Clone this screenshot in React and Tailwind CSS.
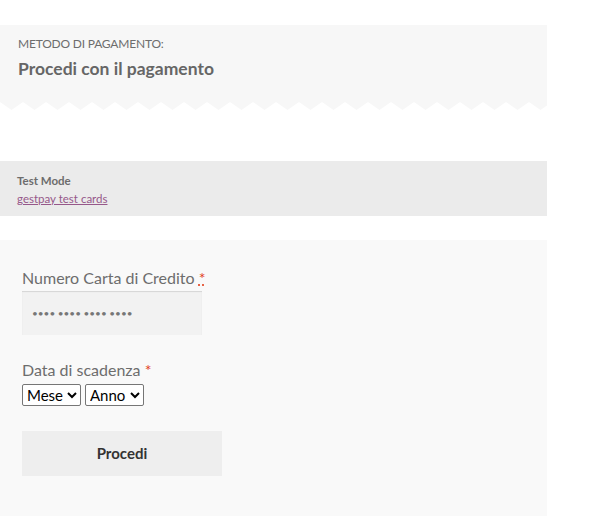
import React from 'react';

const font = { fontFamily: 'Lato, "Noto Sans", sans-serif' };

const Zigzag = () => (
    <svg width="547" height="10" className="block">
        <defs>
            <pattern id="zz" width="23" height="10" patternUnits="userSpaceOnUse">
                <path d="M0 0 H23 V2 L11.5 10 L0 2 Z" fill="#f7f7f7" />
            </pattern>
        </defs>
        <rect width="547" height="10" fill="url(#zz)" />
    </svg>
);

export default function App() {
    return (
        <div className="w-[601px] h-[522px] bg-white pt-[25px]" style={font}>
            <div className="w-[547px]">
                <div className="bg-[#f7f7f7] h-[75px] px-[18px] pt-[11px]">
                    <div className="text-[12px] leading-[16px] text-[#6d6d6d] uppercase tracking-[-0.2px]">Metodo di pagamento:</div>
                    <div className="mt-[6px] text-[17.5px] leading-[22px] font-bold text-[#666]">Procedi con il pagamento</div>
                </div>
                <Zigzag />

                <div className="mt-[51px] h-[55px] bg-[#ebebeb] px-[17px] pt-[12px]">
                    <div className="text-[11.5px] leading-[15px] font-bold text-[#6d6d6d]">Test Mode</div>
                    <a href="#" className="block mt-[3px] text-[11.5px] leading-[15px] text-[#96588a] underline">gestpay test cards</a>
                </div>

                <div className="mt-[24px] h-[276px] bg-[#f9f9f9] px-[22px] pt-[28px]">
                    <label className="block text-[16px] leading-[20px] text-[#6d6d6d]">
                        Numero Carta di Credito <abbr className="text-[#e2401c] underline decoration-dotted" title="obbligatorio">*</abbr>
                    </label>
                    <div className="mt-[3px] w-[180px] h-[44px] bg-[#f2f2f2] shadow-[inset_0_1px_1px_rgba(0,0,0,0.12)] flex items-center pl-[10px] text-[10px] text-[#777]">
                        •••• •••• •••• ••••
                    </div>

                    <label className="block mt-[25px] text-[16px] leading-[20px] text-[#6d6d6d]">
                        Data di scadenza <span className="text-[#e2401c]">*</span>
                    </label>
                    <div className="flex gap-[4px] mt-[4px]">
                        <select className="w-[59px] h-[22px] border border-[#767676] rounded-[2px] bg-white text-[15px] text-black" defaultValue="">
                            <option value="">Mese</option>
                        </select>
                        <select className="w-[59px] h-[22px] border border-[#767676] rounded-[2px] bg-white text-[15px] text-black" defaultValue="">
                            <option value="">Anno</option>
                        </select>
                    </div>

                    <button className="mt-[25px] w-[200px] h-[45px] bg-[#eeeeee] text-[15px] font-bold text-[#333]">Procedi</button>
                </div>
            </div>
        </div>
    );
}
